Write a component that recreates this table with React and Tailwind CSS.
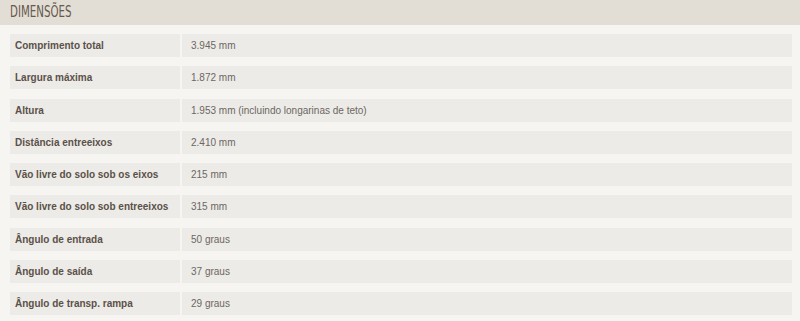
const rows = [
  ["Comprimento total", "3.945 mm"],
  ["Largura máxima", "1.872 mm"],
  ["Altura", "1.953 mm (incluindo longarinas de teto)"],
  ["Distância entreeixos", "2.410 mm"],
  ["Vão livre do solo sob os eixos", "215 mm"],
  ["Vão livre do solo sob entreeixos", "315 mm"],
  ["Ângulo de entrada", "50 graus"],
  ["Ângulo de saída", "37 graus"],
  ["Ângulo de transp. rampa", "29 graus"],
];

export default function App() {
  return (
    <div className="w-[800px] h-[321px] bg-[#f6f5f1] overflow-hidden" style={{ fontFamily: '"Liberation Sans", Arial, sans-serif' }}>
      <div className="h-[25px] bg-[#e3ded5] flex items-center pl-[10px]">
        <span
          className="inline-block origin-left scale-x-[0.76] text-[15px] text-[#65594e] leading-none"
          style={{ fontFamily: '"DejaVu Sans Condensed", "DejaVu Sans", sans-serif' }}
        >
          DIMENSÕES
        </span>
      </div>
      <div className="flex flex-col gap-[9.25px] pt-[9px] pl-[10px] pr-[8px]">
        {rows.map(([k, v]) => (
          <div key={k} className="flex gap-[2px] h-[23px]">
            <div className="w-[170px] bg-[#ecebe7] flex items-center pl-[5px] text-[10px] font-bold text-[#5b5149] whitespace-nowrap">
              {k}
            </div>
            <div className="flex-1 bg-[#ecebe7] flex items-center pl-[9px] text-[10px] text-[#6d6762] whitespace-nowrap">
              {v}
            </div>
          </div>
        ))}
      </div>
    </div>
  );
}
